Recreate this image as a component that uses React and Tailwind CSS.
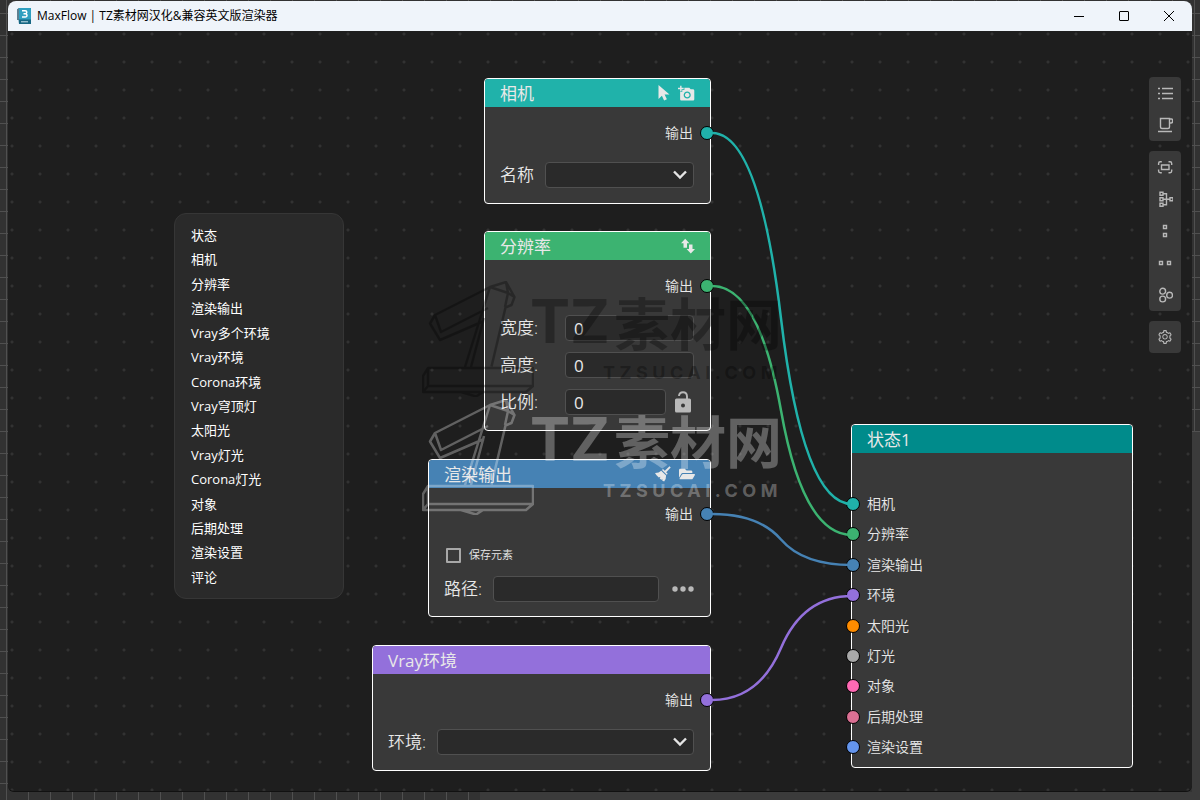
import { useState } from "react";
import { AiOutlineSetting } from "react-icons/ai";
import { FaFolderOpen } from "react-icons/fa";
import { MdAddAPhoto } from "react-icons/md";

const menuItems = [
  "状态",
  "相机",
  "分辨率",
  "渲染输出",
  "Vray多个环境",
  "Vray环境",
  "Corona环境",
  "Vray穹顶灯",
  "太阳光",
  "Vray灯光",
  "Corona灯光",
  "对象",
  "后期处理",
  "渲染设置",
  "评论",
];

const inputs = [
  { label: "相机", color: "bg-[#20b2aa]" },
  { label: "分辨率", color: "bg-[#3cb371]" },
  { label: "渲染输出", color: "bg-[#4682b4]" },
  { label: "环境", color: "bg-[#9370db]" },
  { label: "太阳光", color: "bg-[#ff8c00]" },
  { label: "灯光", color: "bg-[#a9a9a9]" },
  { label: "对象", color: "bg-[#ff69b4]" },
  { label: "后期处理", color: "bg-[#db7093]" },
  { label: "渲染设置", color: "bg-[#6495ed]" },
];

// canvas coordinates of the connected ports
const edges = [
  { y1: 102, y2: 473, color: "#20b2aa" },
  { y1: 255, y2: 504, color: "#3cb371" },
  { y1: 483, y2: 534, color: "#4682b4" },
  { y1: 669, y2: 565, color: "#9370db" },
];

const edgePath = ({ y1, y2 }) =>
  `M704 ${y1} Q751 ${y1} 773 ${(y1 + y2) / 2} T844 ${y2}`;

function Port({ color, className }) {
  return (
    <span
      className={`absolute size-[14px] rounded-full border border-black ${color} ${className}`}
    />
  );
}

function Node({ title, header, className, icons, children }) {
  return (
    <section
      className={`absolute rounded border border-white bg-[#393939] ${className}`}
    >
      <header
        className={`flex h-7 items-center justify-between rounded-t-[3px] px-[15px] ${header}`}
      >
        <h2 className="pt-0.5 text-[17px] leading-6 font-normal">{title}</h2>
        <div className="flex items-center gap-2">{icons}</div>
      </header>
      {children}
    </section>
  );
}

function Output({ color }) {
  return (
    <div className="relative flex h-[52px] items-center justify-end pr-[17px] text-sm">
      输出
      <Port color={color} className="-right-1" />
    </div>
  );
}

function IconButton({ label, children }) {
  return (
    <button type="button" aria-label={label} className="flex">
      {children}
    </button>
  );
}

function Select({ id }) {
  return (
    <div className="relative flex-1">
      <select
        id={id}
        className="block h-[26px] w-full appearance-none rounded border border-[#505050] bg-[#2a2a2a] px-2"
      />
      <svg
        viewBox="0 0 14 10"
        className="pointer-events-none absolute top-2 right-[7px] h-[10px] w-[14px]"
        fill="none"
        stroke="#e4e4e4"
        strokeWidth="2.4"
      >
        <path d="M1 1.5 7 7.5 13 1.5" />
      </svg>
    </div>
  );
}

function NumberRow({ id, label, value, onChange, children }) {
  return (
    <div className="flex h-[26px] items-center">
      <label htmlFor={id} className="w-[65px]">
        {label}
      </label>
      <input
        id={id}
        value={value}
        onChange={(e) => onChange(id, e.target.value)}
        className="h-[26px] min-w-0 flex-1 rounded border border-[#505050] bg-[#2a2a2a] px-2 font-normal"
      />
      {children}
    </div>
  );
}

function ToolButton({ label, children }) {
  return (
    <button
      type="button"
      aria-label={label}
      className="flex size-8 items-center justify-center text-[#b8b8b8]"
    >
      {children}
    </button>
  );
}

function ToolIcon({ children }) {
  return (
    <svg
      viewBox="0 0 16 16"
      className="size-4"
      fill="none"
      stroke="currentColor"
      strokeWidth="1.4"
    >
      {children}
    </svg>
  );
}

function Toolbar() {
  return (
    <aside className="absolute top-[46px] right-[11px] flex flex-col gap-[10px]">
      <div className="rounded bg-[#393939]">
        <ToolButton label="列表">
          <ToolIcon>
            <path d="M1 3.5h2M1 8.500h2M1 13.500h2M5 3.500h11M5 8.500h11M5 13.500h11" />
          </ToolIcon>
        </ToolButton>
        <ToolButton label="咖啡">
          <ToolIcon>
            <path d="M3.500 1.500h9v8.500q0 1.500-1.500 1.500H5q-1.500 0-1.500-1.500zM12.500 2h2q1 0 1 1v1.500q0 1.500-1.500 1.500h-1.500M1 14.500h14" />
          </ToolIcon>
        </ToolButton>
      </div>
      <div className="rounded bg-[#393939]">
        <ToolButton label="适应视图">
          <ToolIcon>
            <path d="M1.600 6V4.400q0-1.600 1.600-1.600h1.600M11.500 2.800h1.600q1.600 0 1.600 1.600V6M1.600 10.500v1.600q0 1.600 1.600 1.600h1.600M11.500 13.700h1.600q1.600 0 1.600-1.600v-1.600" />
            <path d="M4.500 6h7.500v4.500h-7.500z" />
          </ToolIcon>
        </ToolButton>
        <ToolButton label="自动布局">
          <ToolIcon>
            <path d="M3 1.200h3v3H3zM3 6.700h3v3H3zM3 12.200h3v3H3zM13 6.700h3v3h-3zM6 2.700h3.500v11H6M6 8.200h7" />
          </ToolIcon>
        </ToolButton>
        <ToolButton label="垂直排列">
          <ToolIcon>
            <path d="M6.500 2.500h3v3h-3zM6.500 10.500h3v3h-3z" />
          </ToolIcon>
        </ToolButton>
        <ToolButton label="水平排列">
          <ToolIcon>
            <path d="M2.500 6.500h3v3h-3zM10.500 6.500h3v3h-3z" />
          </ToolIcon>
        </ToolButton>
        <ToolButton label="分组">
          <ToolIcon>
            <circle cx="5.700" cy="4.200" r="2.900" />
            <circle cx="5.700" cy="12" r="2.900" />
            <circle cx="12.600" cy="8.200" r="2.900" />
          </ToolIcon>
        </ToolButton>
      </div>
      <div className="rounded bg-[#393939]">
        <ToolButton label="设置">
          <AiOutlineSetting size={16} />
        </ToolButton>
      </div>
    </aside>
  );
}

function Watermark({ className }) {
  return (
    <div
      aria-hidden="true"
      className={`pointer-events-none absolute flex ${className}`}
    >
      <svg
        viewBox="0 0 112 116"
        className="h-[116px] w-28"
        fill="none"
        stroke="currentColor"
        strokeWidth="2.5"
        strokeLinejoin="round"
      >
        <path d="M62 40 18 59 8 42.500 13 34 68 6 84 1l8.500 15-3 8-6 2.500-14 59M13 34 19 51l47-24M68 6 43 86M62 37 49 86M68 6l18 6 6.500 4M84 1l2 11-3 14M6 87h105v18l-7 6H1V95zM6 87v18h105M6 105l-5 6M39 111l15 4.500 7-4.500" />
      </svg>
      <div className="-ml-1">
        <p className="flex items-center gap-1 leading-[80px]">
          <span className="font-[Inter,sans-serif] text-[60px] font-bold">TZ</span>
          <span className="font-['Noto_Sans_CJK_SC',sans-serif] text-[56px] font-bold">
            素材网
          </span>
        </p>
        <p className="text-right font-[Inter,sans-serif] text-lg leading-6 font-bold tracking-[0.25em]">
          TZSUCAI.COM
        </p>
      </div>
    </div>
  );
}

function TitleBar() {
  return (
    <div className="flex h-[30px] items-center rounded-t-lg bg-[#eff4fa] pl-2 text-black">
      <svg viewBox="0 0 16 18" className="mr-[5px] h-[18px] w-4">
        <path d="M1 2.500 3 1h12v12H1z" fill="#2f9fc0" />
        <path d="M1 2.500 3 1v12H1z" fill="#5d7f90" />
        <path d="M2.500 12.500H15V17H3z" fill="#176783" />
        <path
          d="M6 3.700h3.200q1.600 0 1.600 1.500T9.200 6.700H7.500M9.200 6.700q1.800 0 1.800 1.600T9.200 9.900H6"
          fill="none"
          stroke="#fff"
          strokeWidth="1.500"
        />
        <path d="M5 14.800h7" stroke="#c9e2ea" />
      </svg>
      <h1 className="flex-1 text-xs font-normal">
        MaxFlow | TZ素材网汉化&amp;兼容英文版渲染器
      </h1>
      <button
        type="button"
        aria-label="最小化"
        className="flex h-full w-[45px] items-center justify-center"
      >
        <span className="h-px w-[10px] bg-black" />
      </button>
      <button
        type="button"
        aria-label="最大化"
        className="flex h-full w-[45px] items-center justify-center"
      >
        <span className="size-[10px] rounded-[1px] border border-black" />
      </button>
      <button
        type="button"
        aria-label="关闭"
        className="flex h-full w-[46px] items-center justify-center"
      >
        <svg viewBox="0 0 10 10" className="size-[10px]" stroke="#000">
          <path d="M0 0 10 10M10 0 0 10" />
        </svg>
      </button>
    </div>
  );
}

export default function App() {
  const [size, setSize] = useState({ width: "0", height: "0", ratio: "0" });
  const [saveElements, setSaveElements] = useState(false);
  const [path, setPath] = useState("");

  const handleSize = (field, value) => {
    setSize((prev) => ({ ...prev, [field]: value }));
  };

  return (
    <div className="flex min-h-screen flex-col [background:linear-gradient(#3b3b3b,#3b3b3b)_right_bottom/60%_8px_no-repeat,linear-gradient(#3b3b3b,#3b3b3b)_right_bottom/8px_46%_no-repeat,linear-gradient(#505050_1px,transparent_1px)_0_13px/22px_22px,linear-gradient(90deg,#505050_1px,transparent_1px)_6px_0/22px_22px,#323232] px-2 pt-px pb-2 font-['Open_Sans','Noto_Sans_CJK_SC',sans-serif] font-[350] text-[#e8e8e8]">
      <TitleBar />
      <main className="relative flex-1 overflow-hidden rounded-b-md border-b border-[#111] bg-[#1e1e1e] bg-[radial-gradient(circle,#323232_1px,transparent_2px)] bg-[size:28px_28px] bg-[position:-10px_-11px]">
        <nav className="absolute top-[182px] left-[166px] w-[170px] rounded-xl border border-[#363636] bg-[#2a2a2a] px-4 py-[9px]">
          <ul className="flex h-[366px] flex-col justify-between text-[13px] leading-6 font-normal text-white">
            {menuItems.map((item) => (
              <li key={item}>
                <button type="button" className="block">
                  {item}
                </button>
              </li>
            ))}
          </ul>
        </nav>

        <Node
          title="相机"
          header="bg-[#20b2aa]"
          className="top-[47px] left-[476px] w-[227px]"
          icons={
            <>
              <IconButton label="选择">
                <svg viewBox="0 0 12 16" className="h-4 w-3" fill="currentColor">
                  <path d="M.5 0v14l3.400-3.200 2.200 4.700 2.800-1.300-2.300-4.600h4.900z" />
                </svg>
              </IconButton>
              <IconButton label="添加相机">
                <MdAddAPhoto size={17} />
              </IconButton>
            </>
          }
        >
          <Output color="bg-[#20b2aa]" />
          <div className="flex items-center pt-[3px] pr-4 pb-[15px] pl-[15px] text-[17px]">
            <label htmlFor="camera" className="w-[45px]">
              名称
            </label>
            <Select id="camera" />
          </div>
        </Node>

        <Node
          title="分辨率"
          header="bg-[#3cb371]"
          className="top-[200px] left-[476px] w-[227px]"
          icons={
            <IconButton label="交换宽高">
              <svg viewBox="0 0 14 16" className="h-4 w-[14px]" fill="currentColor">
                <path d="M4.200.8 8.400 5.200H6v4.600H2.500V5.200H0zM9.800 15.500 5.600 11H8V6.400h3.500V11H14z" />
              </svg>
            </IconButton>
          }
        >
          <Output color="bg-[#3cb371]" />
          <div className="flex flex-col gap-[11px] pt-[3px] pr-4 pb-[15px] pl-[15px] text-[17px]">
            <NumberRow id="width" label="宽度:" value={size.width} onChange={handleSize} />
            <NumberRow id="height" label="高度:" value={size.height} onChange={handleSize} />
            <NumberRow id="ratio" label="比例:" value={size.ratio} onChange={handleSize}>
              <button type="button" aria-label="锁定比例" className="ml-2 flex w-5">
                <svg viewBox="0 0 18 22" className="h-[22px] w-[18px]">
                  <path
                    d="M5 5Q5.200 1.200 9 1.200t4 4V9"
                    fill="none"
                    stroke="#b9b9b9"
                    strokeWidth="1.900"
                  />
                  <rect x="1" y="7.500" width="16" height="14" rx="1.500" fill="#b9b9b9" />
                  <circle cx="9" cy="14.500" r="2" fill="#393939" />
                </svg>
              </button>
            </NumberRow>
          </div>
        </Node>

        <Node
          title="渲染输出"
          header="bg-[#4682b4]"
          className="top-[428px] left-[420px] w-[283px]"
          icons={
            <>
              <IconButton label="清理">
                <svg viewBox="0 0 16 16" className="size-4" fill="currentColor">
                  <path d="M14.500.3 15.700 1.500 11.200 6.200l1.500 1.600-1 1L7 4.100l1-1 1.800 1.700zM6.200 4.700l4.900 4.900q.2 3.400-2 6l-2-1.200.5-1.200-1.300.6-1.600-1.400.8-1.600-1.700.7Q1.300 9.700 0 7q3.800.1 6.200-2.300z" />
                </svg>
              </IconButton>
              <IconButton label="打开文件夹">
                <FaFolderOpen size={16} />
              </IconButton>
            </>
          }
        >
          <Output color="bg-[#4682b4]" />
          <div className="pt-[5px] pr-4 pb-[14px] pl-[15px]">
            <label className="flex h-5 items-center gap-2 text-[11px]">
              <input
                type="checkbox"
                checked={saveElements}
                onChange={(e) => setSaveElements(e.target.checked)}
                className="ml-0.5 size-[15px] appearance-none rounded-[1px] border-2 border-[#a8a8a8] checked:bg-[#a8a8a8]"
              />
              保存元素
            </label>
            <div className="mt-[11px] flex items-center text-[17px]">
              <label htmlFor="path" className="w-[49px]">
                路径:
              </label>
              <input
                id="path"
                value={path}
                onChange={(e) => setPath(e.target.value)}
                className="h-[26px] min-w-0 flex-1 rounded border border-[#505050] bg-[#2a2a2a] px-2 font-normal"
              />
              <button type="button" aria-label="浏览" className="ml-[13px] flex">
                <svg viewBox="0 0 22 6" className="h-[6px] w-[22px]" fill="#b9b9b9">
                  <circle cx="3" cy="3" r="2.700" />
                  <circle cx="11" cy="3" r="2.700" />
                  <circle cx="19" cy="3" r="2.700" />
                </svg>
              </button>
            </div>
          </div>
        </Node>

        <Node
          title="Vray环境"
          header="bg-[#9370db]"
          className="top-[614px] left-[364px] w-[339px]"
        >
          <Output color="bg-[#9370db]" />
          <div className="flex items-center pt-[3px] pr-4 pb-[15px] pl-[15px] text-[17px]">
            <label htmlFor="environment" className="w-[49px]">
              环境:
            </label>
            <Select id="environment" />
          </div>
        </Node>

        <Node
          title="状态1"
          header="bg-[#008b8b]"
          className="top-[393px] left-[843px] w-[282px]"
        >
          <ul className="mt-[41px] mb-[10px] flex h-[263px] flex-col justify-between text-sm leading-5">
            {inputs.map(({ label, color }) => (
              <li key={label} className="relative flex items-center pl-[15px]">
                <Port color={color} className="-left-[6px]" />
                {label}
              </li>
            ))}
          </ul>
        </Node>

        <svg
          className="pointer-events-none absolute inset-0 size-full"
          fill="none"
          strokeWidth="2.5"
        >
          {edges.map((edge) => (
            <path key={edge.color} d={edgePath(edge)} stroke={edge.color} />
          ))}
        </svg>

        <Toolbar />

        <Watermark className="top-[250px] left-[414px] text-black/30" />
        <Watermark className="top-[368px] left-[414px] text-white/30" />
      </main>
    </div>
  );
}
